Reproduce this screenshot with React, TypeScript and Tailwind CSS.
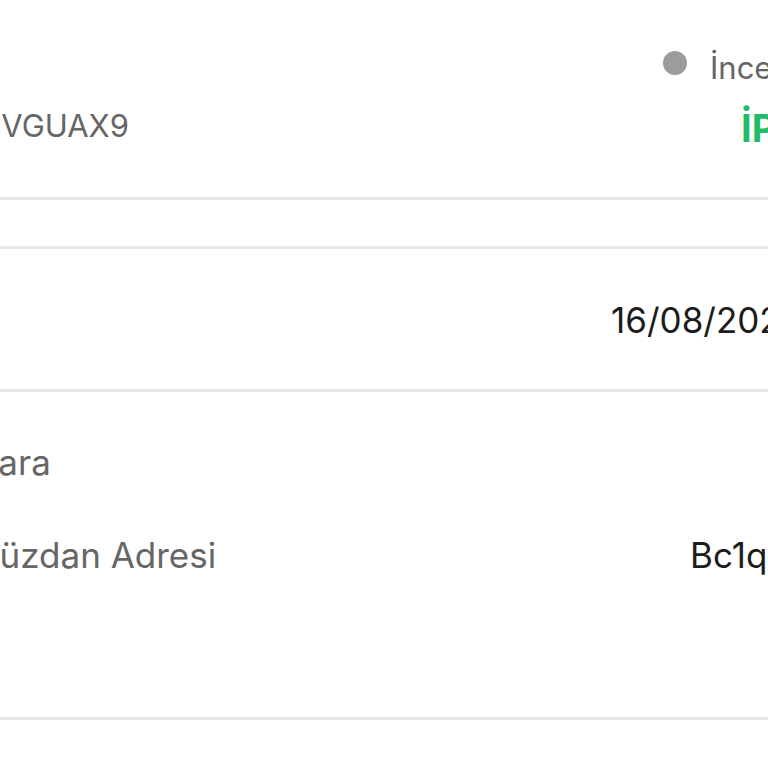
export default function App() {
  return (
    <div className="w-[768px] h-[768px] overflow-hidden bg-white font-['Inter',sans-serif]">
      {/* Row 1: order id + status */}
      <div className="flex h-[197px]">
        <div className="w-[663px] shrink-0 pt-[110px]">
          <div className="flex w-[129px] justify-end whitespace-nowrap text-[31px] leading-[31px] text-[#666666]">
            8ZK2VGUAX9
          </div>
        </div>
        <div className="flex flex-col whitespace-nowrap">
          <div className="flex items-center gap-[23px] pt-[51px]">
            <span className="mb-[8px] block h-[24px] w-[24px] shrink-0 rounded-full bg-[#9c9c9c]" />
            <span className="text-[31px] leading-[31px] text-[#666666]">İnceleniyor</span>
          </div>
          <div className="ml-[78px] pt-[26px] text-[38px] font-bold leading-[38px] text-[#1fbd69]">
            İPTAL ET
          </div>
        </div>
      </div>
      <div className="h-[3px] bg-[#e8e8e8]" />
      <div className="h-[46px]" />
      <div className="h-[3px] bg-[#e8e8e8]" />

      {/* Row 2: date */}
      <div className="h-[140px] pt-[54px]">
        <div className="whitespace-nowrap pl-[611px] text-[35px] leading-[35px] text-[#1c1c1c]">
          16/08/2024 14:32
        </div>
      </div>
      <div className="h-[3px] bg-[#e8e8e8]" />

      {/* Row 3: currency + wallet */}
      <div className="flex h-[325px] flex-col pt-[53px]">
        <div className="flex whitespace-nowrap text-[35px] leading-[35px]">
          <div className="-ml-[24px] text-[#666666]">Para</div>
        </div>
        <div className="mt-[58px] flex whitespace-nowrap text-[35px] leading-[35px]">
          <div className="w-[690px] shrink-0">
            <div className="-ml-[26px] text-[#666666]">Cüzdan Adresi</div>
          </div>
          <div className="text-[#1c1c1c]">Bc1qxy2kgdygjrsqtzq2n0yrf2493p83kkfjhx0wlh</div>
        </div>
      </div>
      <div className="h-[3px] bg-[#e8e8e8]" />
    </div>
  );
}
